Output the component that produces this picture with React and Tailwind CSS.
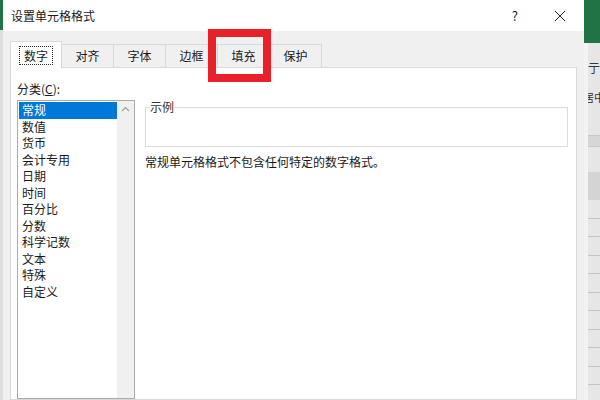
const font = { fontFamily: '"Noto Sans CJK SC", "Noto Sans", sans-serif' };

const tabs = ['数字', '对齐', '字体', '边框', '填充', '保护'];
const categories = ['常规', '数值', '货币', '会计专用', '日期', '时间', '百分比', '分数', '科学记数', '文本', '特殊', '自定义'];

function ExcelStrip() {
    return (
        <div className="flex w-[16px] flex-col bg-[#e6e6e6]">
            <div className="h-[43px] bg-[#217346]" />
            <div className="relative flex-1 overflow-hidden border-l-4 border-[#f3f3f3]">
                <span className="absolute left-0 top-[16px] text-[12px] text-[#333]">亍</span>
                <span className="absolute left-[-5px] top-[46px] whitespace-nowrap text-[11px] text-[#333]">居中</span>
                <div className="mt-[92px] h-[12px] border-y border-[#c8c8c8] bg-[#d6d6d6]" />
                <div className="mt-[25px] h-[28px] bg-[#d4d4d4]" />
                {Array.from({ length: 10 }).map((_, i) => (
                    <div key={i} className="h-[18.5px] border-b border-[#c4c4c4]" />
                ))}
            </div>
        </div>
    );
}

export default function App() {
    return (
        <div className="flex h-[400px] w-[600px] overflow-hidden bg-[#f0f0f0] text-[12px] text-[#1a1a1a]" style={font}>
            <div className="flex w-[3px] flex-col">
                <div className="h-[30px] bg-[#217346]" />
                <div className="flex-1 bg-[#dedede]" />
            </div>

            <div className="flex w-[581px] flex-col bg-[#f0f0f0]">
                <div className="flex h-[31px] items-center bg-white pl-[8px]">
                    <span className="text-[12px]">设置单元格格式</span>
                    <span className="ml-auto mr-[36px] text-[13px]">?</span>
                    <svg className="mr-[18px]" width="12" height="12" viewBox="0 0 12 12">
                        <path d="M1 1 L11 11 M11 1 L1 11" stroke="#222" strokeWidth="1" />
                    </svg>
                </div>

                <div className="relative flex h-[36px] items-end pl-[7px]">
                    {tabs.map((t, i) =>
                        i === 0 ? (
                            <div key={t} className="relative z-10 -mb-px flex h-[27px] w-[52px] items-center justify-center border border-b-0 border-[#d9d9d9] bg-white">
                                <span className="border border-dotted border-[#333] px-[4px] leading-[17px]">{t}</span>
                            </div>
                        ) : (
                            <div key={t} className="flex h-[23px] w-[52px] items-center justify-center border border-b-0 border-l-0 border-[#d9d9d9] bg-[#f0f0f0]">
                                {t}
                            </div>
                        )
                    )}
                    <div className="absolute left-[205px] top-[-2px] h-[53px] w-[63px] border-[8px] border-[#e8202a]" />
                </div>

                <div className="ml-[7px] mr-[7px] flex flex-1 gap-[10px] border border-[#d9d9d9] bg-white pl-[6px] pt-[12px]">
                    <div className="flex w-[118px] flex-col">
                        <span className="leading-[18px]">
                            分类(<span className="underline">C</span>):
                        </span>
                        <div className="mt-[2px] flex flex-1 border border-[#acacac]">
                            <div className="flex flex-1 flex-col pt-[1px]">
                                {categories.map((c, i) => (
                                    <div
                                        key={c}
                                        className={
                                            i === 0
                                                ? 'ml-[1px] h-[16.5px] bg-[#0078d7] pl-[3px] leading-[16.5px] text-white'
                                                : 'h-[16.5px] pl-[4px] leading-[16.5px]'
                                        }
                                    >
                                        {c}
                                    </div>
                                ))}
                            </div>
                            <div className="flex w-[17px] flex-col items-center bg-[#f0f0f0] pt-[5px]">
                                <svg width="9" height="6" viewBox="0 0 9 6">
                                    <path d="M1 5 L4.5 1.5 L8 5" fill="none" stroke="#a0a0a0" strokeWidth="1.2" />
                                </svg>
                            </div>
                        </div>
                    </div>

                    <div className="flex flex-1 flex-col pr-[8px] pt-[27px]">
                        <div className="relative h-[40px] border border-[#dcdcdc]">
                            <span className="absolute left-[4px] top-[-10px] bg-white pr-[1px] leading-[18px] text-[#333]">示例</span>
                        </div>
                        <p className="mt-[6px] leading-[18px]">常规单元格格式不包含任何特定的数字格式。</p>
                    </div>
                </div>
            </div>

            <ExcelStrip />
        </div>
    );
}
